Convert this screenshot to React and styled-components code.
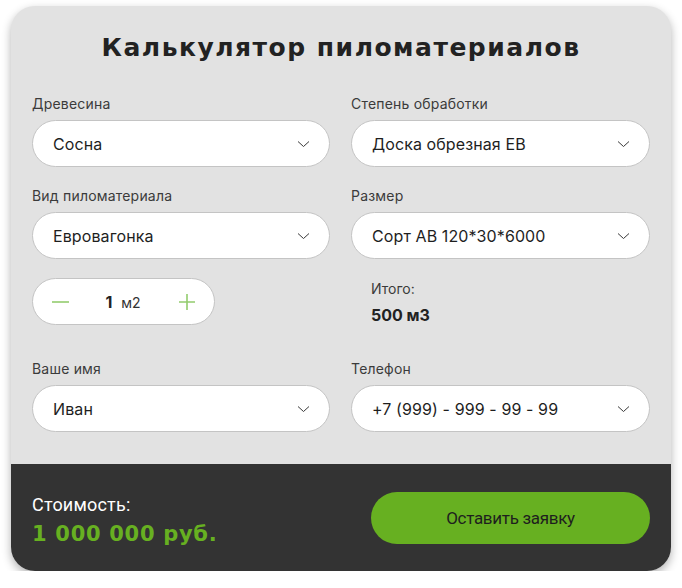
import styled, {createGlobalStyle} from "styled-components";

const GlobalStyle = createGlobalStyle`
  body {
    margin: 0;
    background: #ffffff;
    font-family: Inter, "Noto Sans", sans-serif;
  }
`;

const fields = [
  {label: "Древесина", value: "Сосна"},
  {label: "Степень обработки", value: "Доска обрезная ЕВ"},
  {label: "Вид пиломатериала", value: "Евровагонка"},
  {label: "Размер", value: "Сорт АВ 120*30*6000"},
];

function Chevron() {
  return (
    <svg width="13" height="8" viewBox="0 0 13 8" fill="none">
      <path d="M1 1.5l5.5 5L12 1.5" stroke="#3a3a3a" strokeWidth="1" />
    </svg>
  );
}

function Select({label, value}) {
  return (
    <Field>
      <Label>{label}</Label>
      <SelectBox>
        <span>{value}</span>
        <Chevron />
      </SelectBox>
    </Field>
  );
}

function App() {
  return (
    <>
      <GlobalStyle />
      <Card>
        <Title>Калькулятор пиломатериалов</Title>
        <Grid>
          {fields.map((f) => (
            <Select key={f.label} label={f.label} value={f.value} />
          ))}
          <Stepper>
            <StepBtn>
              <svg width="17" height="2" viewBox="0 0 17 2">
                <path d="M0 1h17" stroke="#93cc6e" strokeWidth="1.6" />
              </svg>
            </StepBtn>
            <Amount>
              <b>1</b>
              <span>м2</span>
            </Amount>
            <StepBtn>
              <svg width="16" height="16" viewBox="0 0 16 16">
                <path d="M0 8h16M8 0v16" stroke="#93cc6e" strokeWidth="1.6" />
              </svg>
            </StepBtn>
          </Stepper>
          <Total>
            <TotalLabel>Итого:</TotalLabel>
            <TotalValue>500 м3</TotalValue>
          </Total>
          <Spaced>
            <Select label="Ваше имя" value="Иван" />
          </Spaced>
          <Spaced>
            <Select label="Телефон" value="+7 (999) - 999 - 99 - 99" />
          </Spaced>
        </Grid>
        <Footer>
          <Price>
            <PriceLabel>Стоимость:</PriceLabel>
            <PriceValue>1 000 000 руб.</PriceValue>
          </Price>
          <SubmitButton>Оставить заявку</SubmitButton>
        </Footer>
      </Card>
    </>
  );
}
export default App;

const Card = styled.div`
  margin: 6px 0 0 11px;
  width: 660px;
  height: 565px;
  box-sizing: border-box;
  background: #e2e2e2;
  border-radius: 24px;
  box-shadow: 0 4px 10px rgba(0, 0, 0, 0.3);
  overflow: hidden;
  display: flex;
  flex-direction: column;
  padding-top: 27px;
`;

const Title = styled.h1`
  margin: 0;
  text-align: center;
  font-family: "DejaVu Sans", sans-serif;
  font-weight: 700;
  font-size: 25px;
  line-height: 30px;
  letter-spacing: 1.5px;
  color: #222;
`;

const Grid = styled.div`
  display: grid;
  grid-template-columns: 298px 299px;
  column-gap: 21px;
  row-gap: 20px;
  padding: 32px 21px 0;
`;

const Field = styled.div`
  display: flex;
  flex-direction: column;
  gap: 7px;
`;

const Label = styled.div`
  font-size: 14px;
  line-height: 18px;
  letter-spacing: 0.2px;
  color: #3b3b3b;
`;

const SelectBox = styled.div`
  height: 47px;
  box-sizing: border-box;
  border: 1px solid #c4c4c4;
  border-radius: 24px;
  background: #fff;
  display: flex;
  align-items: center;
  justify-content: space-between;
  padding: 0 19px 0 20px;
  font-size: 16px;
  letter-spacing: 0.1px;
  color: #1e1e1e;
`;

const Stepper = styled.div`
  width: 183px;
  height: 47px;
  box-sizing: border-box;
  border: 1px solid #c4c4c4;
  border-radius: 24px;
  background: #fff;
  display: flex;
  align-items: center;
  justify-content: space-between;
  padding: 0 19px 0 19px;
  margin-top: -1px;
`;

const StepBtn = styled.div`
  display: flex;
  align-items: center;
`;

const Amount = styled.div`
  display: flex;
  align-items: baseline;
  gap: 9px;
  font-size: 15px;
  color: #222;
  margin-left: -2px;
  b {
    font-size: 16px;
    font-weight: 700;
  }
  span {
    font-size: 14px;
    color: #333;
  }
`;

const Total = styled.div`
  padding: 1px 0 0 20px;
  display: flex;
  flex-direction: column;
  gap: 7px;
`;

const TotalLabel = styled.div`
  font-size: 14px;
  line-height: 18px;
  color: #3b3b3b;
`;

const TotalValue = styled.div`
  font-size: 16px;
  line-height: 20px;
  font-weight: 700;
  color: #222;
`;

const Spaced = styled.div`
  margin-top: 15px;
`;

const Footer = styled.div`
  margin-top: auto;
  height: 107px;
  box-sizing: border-box;
  background: #333333;
  display: flex;
  align-items: center;
  justify-content: space-between;
  padding: 0 21px 0 21px;
`;

const Price = styled.div`
  display: flex;
  flex-direction: column;
  gap: 6px;
  padding-top: 6px;
`;

const PriceLabel = styled.div`
  font-family: Roboto, sans-serif;
  font-size: 18px;
  line-height: 20px;
  color: #fff;
  letter-spacing: 0.2px;
`;

const PriceValue = styled.div`
  font-family: "DejaVu Sans", sans-serif;
  font-size: 21px;
  line-height: 26px;
  font-weight: 700;
  letter-spacing: 0.7px;
  color: #67b021;
`;

const SubmitButton = styled.button`
  width: 279px;
  height: 52px;
  border: none;
  border-radius: 26px;
  background: #67b021;
  color: #1e1e1e;
  font-family: Roboto, sans-serif;
  font-size: 17px;
  letter-spacing: -0.3px;
  cursor: pointer;
  margin-top: 0;
`;
